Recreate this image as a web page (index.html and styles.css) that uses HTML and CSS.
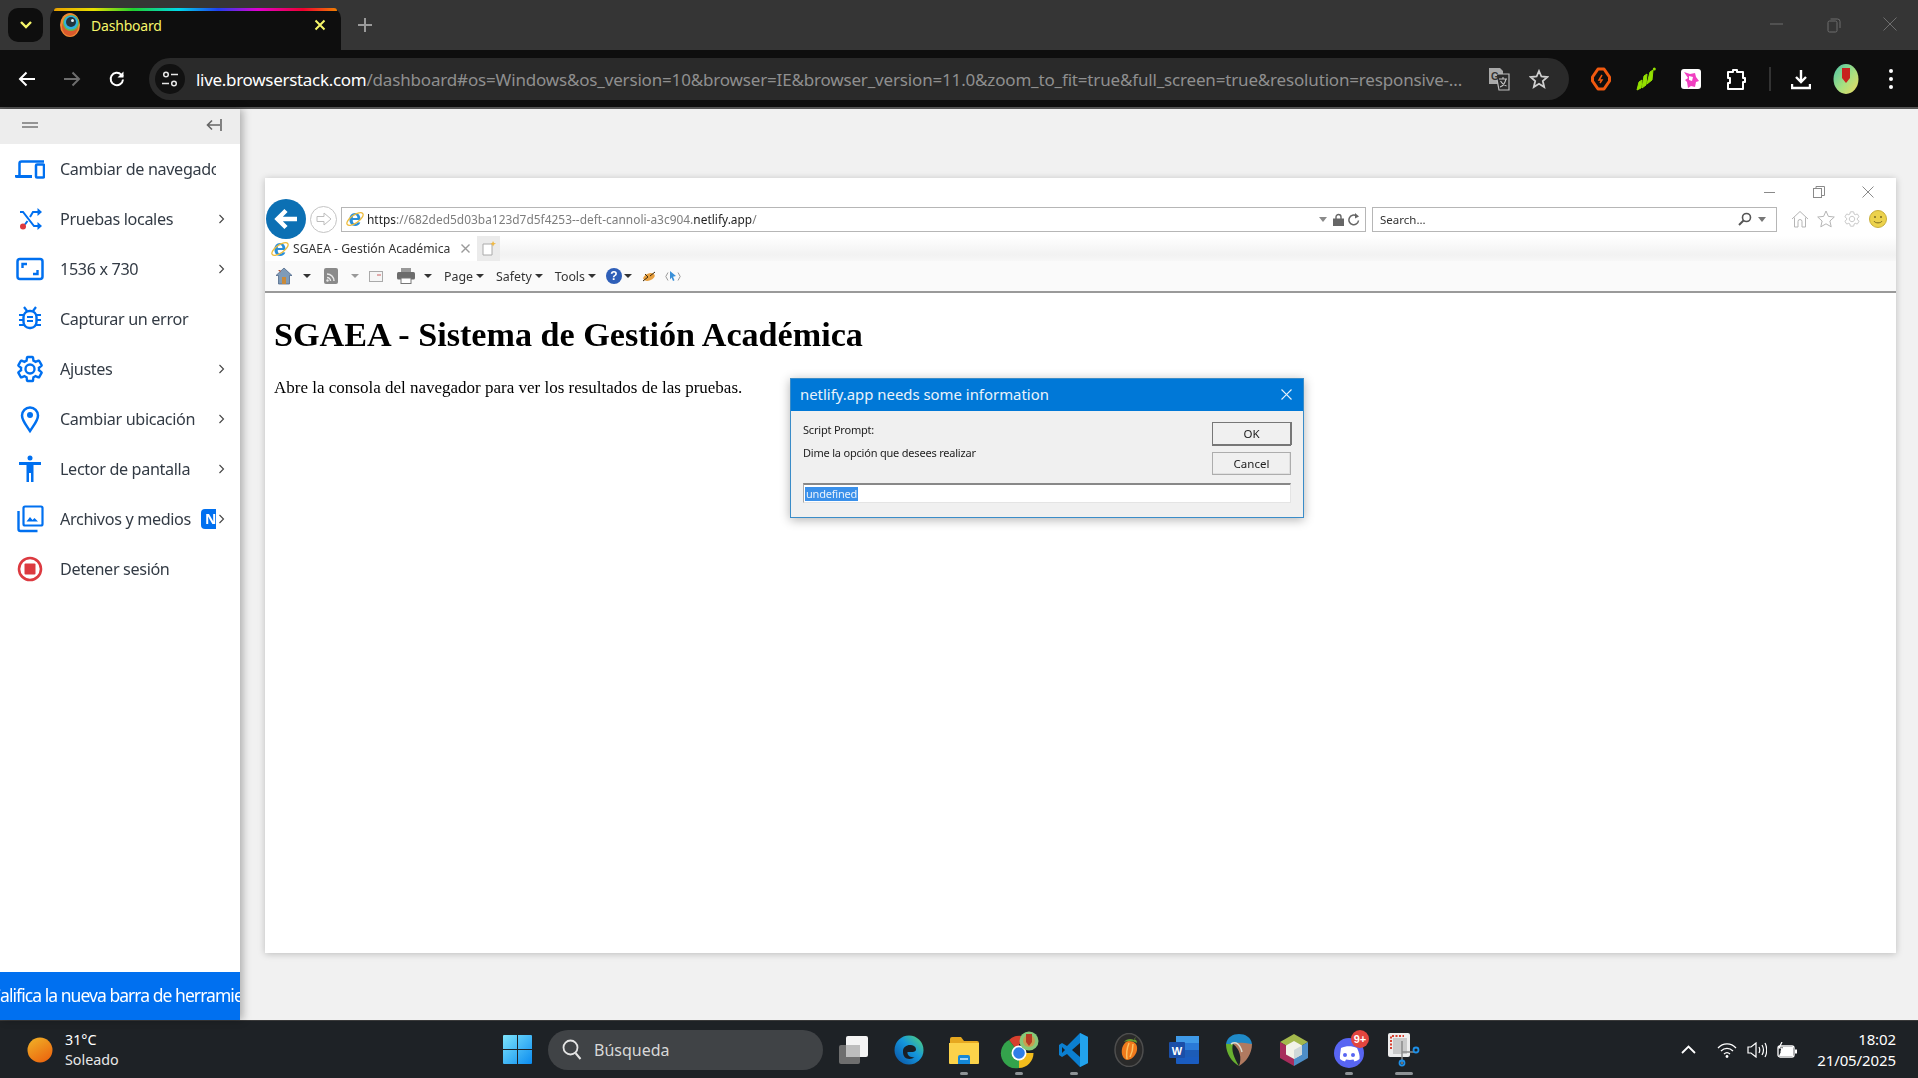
FILE: index.html
```html
<!DOCTYPE html>
<html lang="es">
<head>
<meta charset="utf-8">
<title>Dashboard</title>
<link rel="stylesheet" href="styles.css">
</head>
<body>
<div class="app">

  <div class="tabstrip">
    <div class="tab-search"><svg width="14" height="10" viewBox="0 0 14 10"><path d="M2 2l5 5 5-5" fill="none" stroke="#f6f66a" stroke-width="2.4"/></svg></div>
    <div class="tab">
      <div class="rainbow"></div>
      <svg class="favicon" width="22" height="24" viewBox="0 0 22 24"><ellipse cx="11" cy="12" rx="10" ry="12" fill="#ee8a35"/><ellipse cx="11" cy="14" rx="8" ry="9" fill="#d9592c"/><circle cx="12" cy="10" r="8" fill="#68b84a"/><circle cx="12" cy="9.5" r="7" fill="#2fb0e0"/><circle cx="12" cy="9" r="5" fill="#23343e"/><circle cx="13.5" cy="7.5" r="1.5" fill="#e6f2f5"/></svg>
      <span class="tab-title">Dashboard</span>
      <svg class="tab-x" width="12" height="12" viewBox="0 0 12 12"><path d="M1.5 1.5l9 9M10.5 1.5l-9 9" stroke="#f6f66a" stroke-width="2"/></svg>
    </div>
    <svg class="newtab" width="14" height="14" viewBox="0 0 14 14"><path d="M7 0v14M0 7h14" stroke="#9a9a9a" stroke-width="2"/></svg>
    <div class="winctl">
      <svg width="14" height="14" viewBox="0 0 14 14"><path d="M0 7h13" stroke="#6e6e6e" stroke-width="1"/></svg>
      <svg width="14" height="16" viewBox="0 0 14 16"><rect x="1" y="4" width="9" height="11" rx="1.5" fill="none" stroke="#6e6e6e"/><path d="M3.5 2h7a2.5 2.5 0 0 1 2.500 2.500V11" fill="none" stroke="#6e6e6e"/></svg>
      <svg width="14" height="14" viewBox="0 0 14 14"><path d="M0.500 0.500l13 13M13.500 0.500l-13 13" stroke="#6e6e6e"/></svg>
    </div>
  </div>

  <div class="toolbar">
    <svg class="nav-i" width="18" height="16" viewBox="0 0 18 16"><path d="M17 8H2M8.500 1.500L2 8l6.500 6.500" fill="none" stroke="#fff" stroke-width="2"/></svg>
    <svg class="nav-i" width="18" height="16" viewBox="0 0 18 16"><path d="M1 8h15M9.500 1.500L16 8l-6.500 6.500" fill="none" stroke="#6d6d6d" stroke-width="2"/></svg>
    <svg class="nav-i" width="18" height="18" viewBox="0 0 18 18"><path d="M15 9.500A6.200 6.200 0 1 1 13.200 4.600L15 6.500" fill="none" stroke="#fff" stroke-width="2"/><path d="M15.500 1.500v6h-6z" fill="#fff"/></svg>
    <div class="omnibox">
      <div class="siteinfo"><svg width="18" height="18" viewBox="0 0 18 18"><circle cx="5" cy="4.500" r="2.300" fill="none" stroke="#e6e6e6" stroke-width="1.500"/><path d="M10 4.500h7M1 13.500h7" stroke="#e6e6e6" stroke-width="1.700"/><circle cx="13" cy="13.500" r="2.300" fill="none" stroke="#e6e6e6" stroke-width="1.500"/></svg></div>
      <div class="url"><span class="url-host">live.browserstack.com</span>/dashboard#os=Windows&amp;os_version=10&amp;browser=IE&amp;browser_version=11.0&amp;zoom_to_fit=true&amp;full_screen=true&amp;resolution=responsive-...</div>
      <svg class="omni-i" width="22" height="24" viewBox="0 0 22 24"><path d="M1 1h11l3 3v13H1z" fill="#a9a9a9"/><path d="M8 7h13v16H11z" fill="#2b2b2b" stroke="#bdbdbd" stroke-width="1.200"/><text x="3" y="13" class="svgt-g">G</text><path d="M11 12h8M15 10v2M12 20c3-1 5-4 6-8M12.500 14c1 2 3 4 6 5" fill="none" stroke="#c6c6c6" stroke-width="1.100"/></svg>
      <svg class="omni-i star" width="20" height="20" viewBox="0 0 20 20"><path d="M10 2l2.400 5.500 6 .5-4.600 4 1.400 6L10 14.800 4.800 18l1.400-6-4.600-4 6-.5z" fill="none" stroke="#cfcfcf" stroke-width="1.800"/></svg>
    </div>
    <div class="exts">
      <svg width="20" height="24" viewBox="0 0 20 24"><path d="M7 2h6l5.500 8v4L13 22H7l-5.500-8v-4z" fill="none" stroke="#f0590f" stroke-width="3" stroke-linejoin="round"/><path d="M11 8l-3 5h3l-2 3" fill="none" stroke="#f0590f" stroke-width="1.500"/></svg>
      <svg width="20" height="24" viewBox="0 0 20 24"><path d="M1 23l2-8 3-2-1 8zM6 21l2-12 3-2-1 11zM11 17l3-12 3-2-1 10z" fill="#93e000" stroke="#93e000"/><circle cx="18.300" cy="2" r="1.500" fill="#93e000"/></svg>
      <svg width="20" height="24" viewBox="0 0 20 24"><rect y="2" width="20" height="20" rx="3" fill="#fff"/><path d="M3 5l6 2 5-1 1 4 3 4-3 1-1 5-4-1-3 2-1-6-2-2 3-2z" fill="#f040c0"/><path d="M8 9l4 1-1 4-3-1z" fill="#fff"/></svg>
      <svg width="20" height="24" viewBox="0 0 20 24"><path d="M2 5h5V3h4v2h6v6h2v4h-2v7H2v-6h2v-5H2z" fill="none" stroke="#fff" stroke-width="2" stroke-linejoin="round"/></svg>
      <div class="ext-sep"></div>
      <svg class="ext-dl" width="20" height="24" viewBox="0 0 20 24"><path d="M10 3v12M5 10l5 5 5-5" fill="none" stroke="#fff" stroke-width="2.400"/><path d="M1 17v4h18v-4" fill="none" stroke="#fff" stroke-width="2.400"/></svg>
      <svg class="ext-prof" width="26" height="30" viewBox="0 0 26 30"><defs><linearGradient id="prof" x1="0" y1="0" x2="1" y2="1"><stop offset="0" stop-color="#4ac4a8"/><stop offset=".55" stop-color="#a8e080"/><stop offset="1" stop-color="#f0d860"/></linearGradient></defs><ellipse cx="13" cy="15" rx="12.500" ry="15" fill="url(#prof)"/><path d="M9 4h8v10l-4 5-4-5z" fill="#c8221e"/></svg>
      <svg class="ext-menu" width="8" height="22" viewBox="0 0 8 22"><circle cx="4" cy="3" r="2" fill="#fff"/><circle cx="4" cy="11" r="2" fill="#fff"/><circle cx="4" cy="19" r="2" fill="#fff"/></svg>
    </div>
  </div>
  <div class="chrome-edge"></div>

  <div class="content">
    <aside class="sidebar">
      <div class="side-head">
        <svg width="16" height="6" viewBox="0 0 16 6"><path d="M0 1h16M0 5h16" stroke="#777" stroke-width="1.500"/></svg>
        <svg width="16" height="12" viewBox="0 0 16 12"><path d="M15 0v12" stroke="#666" stroke-width="1.600"/><path d="M14 6H2M6 1.500L1.500 6 6 10.500" fill="none" stroke="#666" stroke-width="1.600"/></svg>
      </div>
      <ul class="side-list">
        <li class="side-row">
          <svg class="side-i" width="30" height="30" viewBox="0 0 30 30"><path d="M4.500 22V9.500a2 2 0 0 1 2-2H29" fill="none" stroke="#0070f0" stroke-width="2.500"/><path d="M0 21h17v3H1.500A1.500 1.500 0 0 1 0 22.500z" fill="#0070f0"/><rect x="21" y="10.500" width="8" height="13" rx="1" fill="none" stroke="#0070f0" stroke-width="2.500"/></svg>
          <span class="side-label">Cambiar de navegador</span><span class="chev-slot"></span>
        </li>
        <li class="side-row">
          <svg class="side-i" width="30" height="30" viewBox="0 0 30 30"><path d="M5 8h3l11 14h5M5 22" fill="none" stroke="#0070f0" stroke-width="2"/><path d="M12.500 17l-2.500 3.500M15 13l3-5h6" fill="none" stroke="#0070f0" stroke-width="2"/><path d="M22.500 4l4.500 4-4.500 4zM22.500 18l4.500 4-4.500 4z" fill="#0070f0"/><circle cx="8" cy="22.500" r="3" fill="#dc3a40"/></svg>
          <span class="side-label">Pruebas locales</span><svg class="chev" width="7" height="10" viewBox="0 0 7 10"><path d="M1.500 1l4 4-4 4" fill="none" stroke="#444" stroke-width="1.100"/></svg>
        </li>
        <li class="side-row">
          <svg class="side-i" width="30" height="30" viewBox="0 0 30 30"><rect x="2.500" y="5" width="25" height="20" rx="2.500" fill="none" stroke="#0070f0" stroke-width="2.500"/><path d="M7.500 14v-4h4.500M22.500 16v4H18" fill="none" stroke="#0070f0" stroke-width="2.400"/></svg>
          <span class="side-label">1536 x 730</span><svg class="chev" width="7" height="10" viewBox="0 0 7 10"><path d="M1.500 1l4 4-4 4" fill="none" stroke="#444" stroke-width="1.100"/></svg>
        </li>
        <li class="side-row">
          <svg class="side-i" width="30" height="30" viewBox="0 0 30 30"><rect x="8.500" y="7" width="13" height="17" rx="6" fill="none" stroke="#0070f0" stroke-width="2.400"/><path d="M12 13h6M12 17h6" stroke="#0070f0" stroke-width="2"/><path d="M9 3l3 4M21 3l-3 4M4 11h5M26 11h-5M4 16h5M26 16h-5M4 21h5M26 21h-5" stroke="#0070f0" stroke-width="2.200"/></svg>
          <span class="side-label">Capturar un error</span><span class="chev-slot"></span>
        </li>
        <li class="side-row">
          <svg class="side-i" width="30" height="30" viewBox="0 0 24 24"><path d="M19.140 12.940c.04-.3.06-.61.06-.94 0-.32-.02-.64-.07-.94l2.030-1.580c.18-.14.23-.41.12-.61l-1.920-3.320c-.12-.22-.37-.29-.59-.22l-2.390.96c-.5-.38-1.030-.7-1.620-.94l-.36-2.540c-.04-.24-.24-.41-.48-.41h-3.840c-.24 0-.43.17-.47.41l-.36 2.540c-.59.24-1.130.57-1.620.94l-2.390-.96c-.22-.08-.47 0-.59.22L2.740 8.870c-.12.21-.08.47.12.61l2.030 1.580c-.05.3-.09.63-.09.94s.02.64.07.94l-2.030 1.580c-.18.14-.23.41-.12.61l1.920 3.320c.12.22.37.29.59.22l2.390-.96c.5.38 1.030.7 1.620.94l.36 2.540c.05.24.24.41.48.41h3.840c.24 0 .44-.17.47-.41l.36-2.540c.59-.24 1.130-.56 1.620-.94l2.390.96c.22.08.47 0 .59-.22l1.920-3.320c.12-.22.07-.47-.12-.61l-2.010-1.580zM12 15.600c-1.980 0-3.600-1.620-3.600-3.600s1.620-3.600 3.600-3.600 3.600 1.620 3.600 3.600-1.620 3.600-3.600 3.600z" fill="none" stroke="#0070f0" stroke-width="1.900"/></svg>
          <span class="side-label">Ajustes</span><svg class="chev" width="7" height="10" viewBox="0 0 7 10"><path d="M1.500 1l4 4-4 4" fill="none" stroke="#444" stroke-width="1.100"/></svg>
        </li>
        <li class="side-row">
          <svg class="side-i" width="30" height="30" viewBox="0 0 30 30"><path d="M15 27C11 21 7 16.500 7 11.500a8 8 0 0 1 16 0C23 16.500 19 21 15 27z" fill="none" stroke="#0070f0" stroke-width="2.500"/><circle cx="15" cy="11" r="3" fill="#0070f0"/></svg>
          <span class="side-label">Cambiar ubicación</span><svg class="chev" width="7" height="10" viewBox="0 0 7 10"><path d="M1.500 1l4 4-4 4" fill="none" stroke="#444" stroke-width="1.100"/></svg>
        </li>
        <li class="side-row">
          <svg class="side-i" width="30" height="30" viewBox="0 0 30 30"><circle cx="15" cy="4" r="2.500" fill="#0070f0"/><path d="M4 8h22v3h-7.500v17h-2.500v-9h-2v9h-2.500V11H4z" fill="#0070f0"/></svg>
          <span class="side-label">Lector de pantalla</span><svg class="chev" width="7" height="10" viewBox="0 0 7 10"><path d="M1.500 1l4 4-4 4" fill="none" stroke="#444" stroke-width="1.100"/></svg>
        </li>
        <li class="side-row">
          <svg class="side-i" width="30" height="30" viewBox="0 0 30 30"><rect x="8.500" y="2.500" width="19" height="19" rx="1.500" fill="none" stroke="#0070f0" stroke-width="2.200"/><path d="M3.500 7v18a2 2 0 0 0 2 2h17" fill="none" stroke="#0070f0" stroke-width="2.400"/><path d="M11.500 17.500l3.500-4.500 2.500 3 2-2 3.500 3.500z" fill="#0070f0"/></svg>
          <span class="side-label">Archivos y medios<span class="new-badge">NEW</span></span><svg class="chev" width="7" height="10" viewBox="0 0 7 10"><path d="M1.500 1l4 4-4 4" fill="none" stroke="#444" stroke-width="1.100"/></svg>
        </li>
        <li class="side-row">
          <svg class="side-i" width="30" height="30" viewBox="0 0 30 30"><circle cx="15" cy="15" r="11" fill="none" stroke="#dc3a40" stroke-width="2.600"/><rect x="9.500" y="9.500" width="11" height="11" rx="1" fill="#dc3a40"/></svg>
          <span class="side-label">Detener sesión</span><span class="chev-slot"></span>
        </li>
      </ul>
      <div class="side-foot"><span class="foot-text">Califica la nueva barra de herramientas</span></div>
    </aside>

    <main class="stage">
      <div class="ie">
        <div class="ie-ctl">
          <svg width="12" height="12" viewBox="0 0 12 12"><path d="M0 6.500h11" stroke="#8a8a8a"/></svg>
          <svg width="12" height="12" viewBox="0 0 12 12"><rect x=".5" y="2.500" width="8" height="9" fill="#fff" stroke="#8a8a8a"/><path d="M3 2.500V.5h8.500v9H9" fill="none" stroke="#8a8a8a"/></svg>
          <svg width="12" height="12" viewBox="0 0 12 12"><path d="M.5.500l11 11M11.500.500l-11 11" stroke="#8a8a8a"/></svg>
        </div>
        <div class="ie-nav">
          <div class="ie-back"><svg width="24" height="22" viewBox="0 0 24 22"><path d="M23 11H5M12 2.500L3.500 11l8.500 8.500" fill="none" stroke="#fff" stroke-width="4.500"/></svg></div>
          <div class="ie-fwd"><svg width="16" height="14" viewBox="0 0 16 14"><path d="M1 4.500h7V1l7 6-7 6V9.500H1z" fill="none" stroke="#bdbdbd"/></svg></div>
          <div class="ie-addr">
            <svg class="ie-logo" width="18" height="18" viewBox="0 0 18 18"><text x="9" y="15.500" class="svgt-e">e</text><ellipse cx="9" cy="9" rx="9.500" ry="4" transform="rotate(-35 9 9)" fill="none" stroke="#eebc3c" stroke-width="1.300"/></svg>
            <span class="ie-url"><span class="ie-dark">https</span>://682ded5d03ba123d7d5f4253--deft-cannoli-a3c904.<span class="ie-dark">netlify.app</span>/</span>
            <svg class="ie-caret" width="8" height="5" viewBox="0 0 8 5"><path d="M0 0h8L4 5z" fill="#8a8a8a"/></svg>
            <svg class="ie-lock" width="11" height="13" viewBox="0 0 11 13"><path d="M3 6V4a2.500 2.500 0 0 1 5 0v2" fill="none" stroke="#666" stroke-width="1.400"/><rect y="5.500" width="11" height="7.500" fill="#666"/></svg>
            <svg width="12" height="13" viewBox="0 0 12 13"><path d="M10.500 7.500A4.800 4.800 0 1 1 8.500 3" fill="none" stroke="#666" stroke-width="1.500"/><path d="M7 0l4 3.500-4 2z" fill="#666"/></svg>
          </div>
          <div class="ie-search">
            <span class="ie-search-t">Search...</span>
            <svg width="14" height="14" viewBox="0 0 14 14"><circle cx="8.500" cy="5.500" r="4" fill="none" stroke="#555" stroke-width="1.600"/><path d="M5.500 8.500L1 13" stroke="#555" stroke-width="2"/></svg>
            <svg class="ie-caret2" width="8" height="5" viewBox="0 0 8 5"><path d="M0 0h8L4 5z" fill="#777"/></svg>
          </div>
          <div class="ie-tools">
            <svg width="18" height="18" viewBox="0 0 18 18"><path d="M1 9l8-7.500L17 9M3.500 7.500V17h3.500v-5.500a2 2 0 0 1 4 0V17h3.500V7.500" fill="none" stroke="#b5b5b5"/></svg>
            <svg width="18" height="18" viewBox="0 0 18 18"><path d="M9 1l2.400 5.400 5.900.6-4.400 4 1.300 5.800L9 13.800l-5.200 3 1.300-5.800-4.400-4 5.900-.6z" fill="none" stroke="#b5b5b5"/></svg>
            <svg width="18" height="18" viewBox="0 0 24 24"><path d="M19.140 12.940c.04-.3.06-.61.06-.94 0-.32-.02-.64-.07-.94l2.030-1.580c.18-.14.23-.41.12-.61l-1.920-3.320c-.12-.22-.37-.29-.59-.22l-2.390.96c-.5-.38-1.030-.7-1.620-.94l-.36-2.540c-.04-.24-.24-.41-.48-.41h-3.840c-.24 0-.43.17-.47.41l-.36 2.540c-.59.24-1.130.57-1.620.94l-2.390-.96c-.22-.08-.47 0-.59.22L2.740 8.870c-.12.21-.08.47.12.61l2.030 1.580c-.05.3-.09.63-.09.94s.02.64.07.94l-2.030 1.580c-.18.14-.23.41-.12.61l1.920 3.320c.12.22.37.29.59.22l2.390-.96c.5.38 1.030.7 1.620.94l.36 2.540c.05.24.24.41.48.41h3.840c.24 0 .44-.17.47-.41l.36-2.540c.59-.24 1.130-.56 1.620-.94l2.390.96c.22.08.47 0 .59-.22l1.920-3.320c.12-.22.07-.47-.12-.61l-2.010-1.580zM12 15.600c-1.980 0-3.600-1.620-3.600-3.600s1.620-3.600 3.600-3.600 3.600 1.620 3.600 3.600-1.620 3.600-3.600 3.600z" fill="none" stroke="#b5b5b5"/></svg>
            <svg width="18" height="18" viewBox="0 0 18 18"><circle cx="9" cy="9" r="8.500" fill="#ecd24c" stroke="#c8ae3a"/><circle cx="6" cy="7" r="1" fill="#7a6a20"/><circle cx="12" cy="7" r="1" fill="#7a6a20"/><path d="M5 11c1 2.500 7 2.500 8 0" fill="none" stroke="#7a6a20"/></svg>
          </div>
        </div>
        <div class="ie-tabs">
          <div class="ie-tab">
            <svg width="18" height="18" viewBox="0 0 18 18"><text x="9" y="15.500" class="svgt-e">e</text><ellipse cx="9" cy="9" rx="9.500" ry="4" transform="rotate(-35 9 9)" fill="none" stroke="#eebc3c" stroke-width="1.300"/></svg>
            <span class="ie-tab-t">SGAEA - Gestión Académica</span>
            <svg class="ie-tab-x" width="9" height="9" viewBox="0 0 9 9"><path d="M.5.500l8 8M8.500.500l-8 8" stroke="#9a9a9a" stroke-width="1.400"/></svg>
          </div>
          <div class="ie-newtab"><svg width="14" height="15" viewBox="0 0 14 15"><path d="M1 3h9v11H1z" fill="#fff" stroke="#aaa"/><path d="M11 0l1 2 2 .5-2 1-1 2-.8-2-2-.8 2-.7z" fill="#f0b840"/></svg></div>
        </div>
        <div class="ie-cmd">
          <svg class="c-home" width="18" height="18" viewBox="0 0 18 18"><path d="M9 1L1 8.500h2.500V17h11V8.500H17z" fill="#7f9bb8" stroke="#50688a" stroke-width=".8"/><rect x="7" y="10" width="4" height="7" fill="#c98a3a"/><path d="M3 3h2.500v2.500z" fill="#bb5a3a"/></svg>
          <i class="drop d1"></i>
          <svg class="c-rss" width="14" height="16" viewBox="0 0 14 16"><rect width="14" height="16" rx="2" fill="#8a8a8a"/><path d="M3 6a7 7 0 0 1 7 7M3 9.500a3.500 3.500 0 0 1 3.500 3.500" fill="none" stroke="#e8e8e8" stroke-width="1.500"/><circle cx="3.500" cy="12.500" r="1.200" fill="#e8e8e8"/></svg>
          <i class="drop d2 faded"></i>
          <svg class="c-mail" width="14" height="11" viewBox="0 0 14 11"><rect x=".5" y=".5" width="13" height="10" fill="#f6f6f6" stroke="#aaa"/><path d="M8 4h4" stroke="#cc6060"/></svg>
          <svg class="c-print" width="18" height="16" viewBox="0 0 18 16"><rect x="4" y="0" width="10" height="5" fill="#999"/><rect y="4" width="18" height="7.500" rx="1.500" fill="#6c6c6c"/><rect x="4" y="10" width="10" height="5.500" fill="#fff" stroke="#777"/></svg>
          <i class="drop d3"></i>
          <span class="c-label">Page</span><i class="drop d4"></i>
          <span class="c-label c-s">Safety</span><i class="drop d4"></i>
          <span class="c-label c-s">Tools</span><i class="drop d4"></i>
          <span class="c-help">?</span><i class="drop d5"></i>
          <svg class="c-bug" width="16" height="12" viewBox="0 0 16 12"><ellipse cx="8" cy="7" rx="6" ry="3.500" transform="rotate(-20 8 7)" fill="#e8a040"/><path d="M2 11l5-4M14 2L9 6M4 4l3 3" stroke="#3a2a10"/></svg>
          <svg class="c-dev" width="16" height="11" viewBox="0 0 16 11"><path d="M3 1.500L.8 5.500 3 9.500M13 1.500l2.200 4-2.200 4" fill="none" stroke="#9a9a9a"/><path d="M5 0l6 5-3 .7 1.500 3.500-1.500.8L6.500 6.500 5 8.500z" fill="#3a90d8"/></svg>
        </div>
        <div class="ie-page">
          <h1 class="ie-h1">SGAEA - Sistema de Gestión Académica</h1>
          <p class="ie-p">Abre la consola del navegador para ver los resultados de las pruebas.</p>
        </div>
        <div class="dialog">
          <div class="dlg-title"><span>netlify.app needs some information</span><svg width="11" height="11" viewBox="0 0 11 11"><path d="M.5.500l10 10M10.500.500l-10 10" stroke="#e8f2fb" stroke-width="1.200"/></svg></div>
          <div class="dlg-body">
            <div class="dlg-top">
              <div class="dlg-msg"><div>Script Prompt:</div><div>Dime la opción que desees realizar</div></div>
              <div class="dlg-btns"><div class="btn btn-ok">OK</div><div class="btn">Cancel</div></div>
            </div>
            <div class="dlg-input"><span class="sel">undefined</span></div>
          </div>
        </div>
      </div>
    </main>
  </div>

  <footer class="taskbar">
    <div class="weather">
      <svg width="26" height="26" viewBox="0 0 26 26"><defs><linearGradient id="sun" x1="0" y1="0" x2=".6" y2="1"><stop offset="0" stop-color="#f0b428"/><stop offset="1" stop-color="#ec6a10"/></linearGradient></defs><circle cx="13" cy="13" r="12.500" fill="url(#sun)"/></svg>
      <div class="w-text"><div class="w-temp">31°C</div><div>Soleado</div></div>
    </div>
    <svg class="winlogo" width="29" height="29" viewBox="0 0 29 29"><defs><linearGradient id="win" x1="0" y1="0" x2="1" y2="1"><stop offset="0" stop-color="#7de4fb"/><stop offset="1" stop-color="#0b8cf0"/></linearGradient></defs><path d="M0 1a1 1 0 0 1 1-1h13v14H0zM15 0h13a1 1 0 0 1 1 1v13H15zM0 15h14v14H1a1 1 0 0 1-1-1zM15 15h14v13a1 1 0 0 1-1 1H15z" fill="url(#win)"/></svg>
    <div class="t-search">
      <svg width="20" height="22" viewBox="0 0 20 22"><circle cx="8.500" cy="8.500" r="7" fill="none" stroke="#e4e4e4" stroke-width="1.800"/><path d="M13.500 14l5 6" stroke="#e4e4e4" stroke-width="2"/></svg>
      <span>Búsqueda</span>
    </div>
    <div class="t-apps">
      <div class="t-app"><svg width="30" height="28" viewBox="0 0 30 28"><rect x="0" y="9" width="21" height="19" rx="2" fill="#6e6e6e"/><rect x="7" y="0" width="22" height="21" rx="2" fill="#f4f4f4"/><rect x="7" y="9" width="14" height="12" fill="#bdbdbd"/></svg></div>
      <div class="t-app"><svg width="30" height="30" viewBox="0 0 30 30"><defs><linearGradient id="edge" x1="0" y1="1" x2="1" y2="0"><stop offset="0" stop-color="#0a4ea0"/><stop offset=".55" stop-color="#1496dc"/><stop offset="1" stop-color="#58d870"/></linearGradient></defs><circle cx="15" cy="15" r="14.500" fill="url(#edge)"/><path d="M9 16c0-4 4-6.500 8-6 3 .4 5 2 5 4.500 0 1.500-1.500 2.500-3.500 2.500h-5c-.5 3 2.500 6 7 5-3 3-12 3.500-11.500-6z" fill="#1a1f24"/></svg></div>
      <div class="t-app on"><svg width="30" height="30" viewBox="0 0 30 30"><path d="M1 4a2 2 0 0 1 2-2h9l3 4h13a2 2 0 0 1 2 2v4H1z" fill="#e6a820"/><path d="M0 8h30v20a1 1 0 0 1-1 1H1a1 1 0 0 1-1-1z" fill="#fbd24a"/><path d="M9 22a2 2 0 0 1 2-2h8a2 2 0 0 1 2 2v7H9z" fill="#1488d8"/><rect x="11" y="23" width="8" height="2" fill="#9ed4f8"/></svg></div>
      <div class="t-app on"><svg width="40" height="40" viewBox="0 0 40 40"><g transform="translate(5 8)"><path d="M15 15L5 2A15 15 0 0 1 29 6H15z" fill="#d8402e"/><path d="M15 15H29.500A15 15 0 0 1 15 30z" fill="#f2bc1c"/><path d="M15 15v15A15 15 0 0 1 5 2z" fill="#34a34c"/><circle cx="15" cy="15" r="7.500" fill="#fff"/><circle cx="15" cy="15" r="5.800" fill="#2f7ee8"/></g><circle cx="30" cy="11" r="9.500" fill="#86c878"/><circle cx="30" cy="11" r="6" fill="#c8a050"/><path d="M27 4h6v8l-3 4-3-4z" fill="#b83a24"/></svg></div>
      <div class="t-app on"><svg width="30" height="34" viewBox="0 0 30 34"><path d="M21 0l8 4v26l-8 4L8 21l-5 3-3-2V12l3-2 5 3z" fill="#0b7fd0"/><path d="M21 0l8 4v26l-8 4z" fill="#22a2ec"/><path d="M21 10v14l-8-7z" fill="#1a1f24"/><path d="M3 14v6l3-3z" fill="#1a1f24"/></svg></div>
      <div class="t-app"><svg width="30" height="34" viewBox="0 0 30 34"><ellipse cx="15" cy="17" rx="14" ry="16.500" fill="#2a2a2a" stroke="#4e4e4e" stroke-width="1.500"/><path d="M15 8c5 0 9 3 8 9-1 6-6 10-10 10-4-1-6-6-5-11 .6-3 3-8 7-8z" fill="#ef7a1c"/><path d="M15 10c-2 5-3 10-2 16M19 11c0 5-1 9-3 13" stroke="#fbc060" stroke-width="1.500" fill="none"/><path d="M10 9c2-3 7-4 10-2l3-4-3 3c3 1 3 3 3 4-3-2-9-3-13-1z" fill="#6a9a30"/></svg></div>
      <div class="t-app"><svg width="30" height="30" viewBox="0 0 30 30"><rect x="7" y="1" width="23" height="28" rx="1" fill="#1a5cc0"/><rect x="7" y="1" width="23" height="7" fill="#3f9ae8"/><rect x="7" y="8" width="23" height="7" fill="#2a7ad8"/><rect x="7" y="15" width="23" height="7" fill="#1c5cb8"/><rect x="0" y="7" width="16" height="16" rx="1" fill="#1b4fa8"/><text x="8" y="20" class="svgt-w">W</text></svg></div>
      <div class="t-app"><svg width="28" height="32" viewBox="0 0 28 32"><path d="M1 10C2 3 8 0 14 0s12 3 13 10z" fill="#1f8ac8"/><path d="M1 10c0 10 6 18 13 22C9 24 6 16 8 10z" fill="#68b030"/><path d="M8 10c4-2 10-1 19 0 0 10-6 18-13 22 3-8 1-17-6-22z" fill="#b07a60"/><path d="M6 10c5-3 9 0 11 8" fill="none" stroke="#dcdcd0" stroke-width="1.500"/></svg></div>
      <div class="t-app"><svg width="28" height="32" viewBox="0 0 28 32"><path d="M14 0l14 8-14 8L0 8z" fill="#a4b84c"/><path d="M0 8l14 8v16L0 24z" fill="#a82c5c"/><path d="M28 8L14 16v16l14-8z" fill="#4d8ec8"/><path d="M14 7l8 4.500v9L14 25l-8-4.500v-9z" fill="#f2f2e8"/><path d="M14 16l8-4.500v9L14 25z" fill="#cfd8d8"/></svg></div>
      <div class="t-app on"><svg width="40" height="40" viewBox="0 0 40 40"><g transform="translate(2 0)"><circle cx="18" cy="23" r="15" fill="#5865f2"/><path d="M10 18c5-2.500 11-2.500 16 0 2 4 3 8 2.500 11-2 1.500-3.500 2-5 2.500l-1-2c-2.500.5-5 .5-7.500 0l-1 2c-1.500-.5-3-1-5-2.500-.5-3 .5-7 1-11z" fill="#fff"/><circle cx="14" cy="25" r="2" fill="#5865f2"/><circle cx="22" cy="25" r="2" fill="#5865f2"/><circle cx="29" cy="9" r="9" fill="#e2453f"/><text x="29" y="13" class="svgt-n">9+</text></g></svg></div>
      <div class="t-app on wide"><svg width="32" height="36" viewBox="0 0 32 36"><rect x="0" y="1" width="22" height="24" rx="2" fill="#ededed"/><path d="M3 17V4h13" fill="none" stroke="#d84030" stroke-width="2" stroke-dasharray="2 1.500"/><rect x="5" y="6" width="14" height="16" fill="#c9c9c9"/><path d="M14 9v23M14 20l12 0" stroke="#8a8a8a" stroke-width="1.500"/><circle cx="28" cy="18" r="2.500" fill="none" stroke="#1e90e8" stroke-width="1.800"/><circle cx="14" cy="31" r="2.500" fill="none" stroke="#1e90e8" stroke-width="1.800"/></svg></div>
    </div>
    <div class="tray">
      <svg class="tray-up" width="15" height="9" viewBox="0 0 15 9"><path d="M1 8l6.500-6.500L14 8" fill="none" stroke="#fff" stroke-width="1.800"/></svg>
      <svg width="20" height="16" viewBox="0 0 20 16"><path d="M1 6c5-5.500 13-5.500 18 0M4 9c3.500-3.500 8.500-3.500 12 0M7 12c1.800-1.700 4.200-1.700 6 0" fill="none" stroke="#fff" stroke-width="1.300"/><circle cx="10" cy="14.500" r="1.400" fill="#fff"/></svg>
      <svg width="20" height="16" viewBox="0 0 20 16"><path d="M1 5h3l5-4v14l-5-4H1z" fill="none" stroke="#fff" stroke-width="1.200"/><path d="M12 5c1 2 1 4 0 6M15 3c1.800 3 1.800 7 0 10M18 1c2.300 4 2.300 10 0 14" fill="none" stroke="#fff" stroke-width="1.200"/></svg>
      <svg width="20" height="16" viewBox="0 0 20 16"><rect x="1" y="4" width="16" height="11" rx="2" fill="none" stroke="#fff" stroke-width="1.300"/><path d="M2 14l4-9h10v9z" fill="#fff"/><rect x="18" y="7.500" width="2" height="4" fill="#fff"/><path d="M5 0L2 6h3l-1 4" fill="none" stroke="#fff" stroke-width="1.200"/></svg>
      <div class="clock"><div>18:02</div><div>21/05/2025</div></div>
    </div>
  </footer>
</div>
</body>
</html>
```
FILE: styles.css
```css
* { box-sizing: border-box; }
html, body { margin: 0; padding: 0; }
body { font-family: "Noto Sans", "Open Sans", sans-serif; background: #f1f1f1; overflow: hidden; }
.app { width: 1918px; height: 1078px; display: flex; flex-direction: column; overflow: hidden; }

/* svg text */
.svgt-g { font: bold 10px "Liberation Sans", sans-serif; fill: #333; }
.svgt-e { font: bold 23px "Liberation Sans", sans-serif; fill: #2a8fd8; text-anchor: middle; }
.svgt-w { font: bold 11px "Liberation Sans", sans-serif; fill: #fff; text-anchor: middle; }
.svgt-n { font: bold 11px "Liberation Sans", sans-serif; fill: #fff; text-anchor: middle; }

/* tab strip */
.tabstrip { height: 50px; background: #353535; display: flex; align-items: flex-start; padding-left: 8px; flex: none; }
.tab-search { width: 35px; height: 34px; margin-top: 8px; background: #0e0e0e; border-radius: 10px; display: flex; align-items: center; justify-content: center; }
.tab { position: relative; width: 291px; height: 42px; margin: 8px 0 0 7px; background: #0e0e0e; border-radius: 10px 10px 0 0; display: flex; align-items: center; padding: 0 15px 8px 9px; }
.rainbow { position: absolute; left: 4px; right: 4px; top: 0; height: 3px; border-radius: 3px 3px 0 0; background: linear-gradient(90deg, #e8a000, #e8e000 14%, #20d030 28%, #00d8e8 44%, #2040f0 58%, #e000d0 72%, #f00030 88%, #f08000); }
.tab-title { margin-left: 10px; flex: 1; color: #f6f66a; font-size: 14px; letter-spacing: -0.2px; }
.tab-x { flex: none; }
.newtab { margin: 18px 0 0 17px; }
.winctl { margin-left: auto; margin-top: 17px; width: 148px; padding-right: 21px; display: flex; justify-content: space-between; }

/* toolbar */
.toolbar { height: 57px; background: #0e0e0e; display: flex; align-items: center; padding-left: 18px; flex: none; }
.nav-i { margin-right: 27px; flex: none; }
.omnibox { width: 1420px; height: 42px; margin-left: -4px; background: #2a2a2a; border-radius: 21px; display: flex; align-items: center; padding: 0 14px 0 6px; flex: none; }
.siteinfo { width: 30px; height: 30px; border-radius: 50%; background: #111; display: flex; align-items: center; justify-content: center; flex: none; }
.url { margin-left: 11px; width: 1292px; flex: none; font-size: 17px; color: #8f8f8f; white-space: nowrap; overflow: hidden; letter-spacing: -0.17px; padding-top: 1px; }
.url-host { color: #fff; letter-spacing: -0.3px; }
.omni-i { flex: none; }
.star { margin-left: 19px; }
.exts { display: flex; align-items: center; flex: 1; padding-left: 22px; gap: 25px; }
.ext-sep { width: 2px; height: 24px; margin-left: -2px; background: #333; }
.ext-dl { margin-left: -5px; }
.ext-prof { margin-left: -3px; }
.ext-menu { margin-left: 3px; }
.chrome-edge { height: 2px; background: #555; flex: none; }

/* content */
.content { flex: 1; display: flex; min-height: 0; background: #f1f1f1; }
.sidebar { width: 240px; flex: none; background: #fff; display: flex; flex-direction: column; box-shadow: 3px 0 8px rgba(0,0,0,.28); z-index: 2; }
.side-head { height: 35px; background: #ededed; display: flex; align-items: center; justify-content: space-between; padding: 0 18px 3px 22px; flex: none; }
.side-list { list-style: none; margin: 0; padding: 0; flex: 1; }
.side-row { height: 50px; display: flex; align-items: center; padding-left: 15px; }
.side-i { flex: none; margin-right: 15px; }
.side-label { width: 156px; flex: none; overflow: hidden; white-space: nowrap; font-size: 16.2px; color: #333b45; display: flex; align-items: center; letter-spacing: -0.36px; padding-bottom: 1px; }
.new-badge { flex: none; margin-left: 10px; background: #0070f0; color: #fff; font-size: 14px; font-weight: 700; height: 20px; line-height: 20px; padding: 0 4px; border-radius: 4px; letter-spacing: 0; }
.chev { margin-left: 2px; flex: none; }
.chev-slot { width: 7px; }
.side-foot { height: 48px; background: #0070f0; display: flex; align-items: center; overflow: hidden; flex: none; padding-bottom: 2px; }
.foot-text { color: #fff; font-size: 17.5px; white-space: nowrap; margin-left: -10px; letter-spacing: -0.95px; }

/* stage */
.stage { flex: 1; padding: 69px 22px 67px 25px; min-width: 0; }
.ie { position: relative; width: 1631px; height: 775px; background: #fff; box-shadow: 0 1px 7px rgba(0,0,0,.22); display: flex; flex-direction: column; filter: blur(.35px); }
.ie-ctl { height: 27px; display: flex; justify-content: flex-end; align-items: flex-end; gap: 37px; padding-right: 22px; padding-bottom: 7px; flex: none; }
.ie-nav { height: 31px; display: flex; align-items: center; padding-bottom: 3px; flex: none; }
.ie-back { width: 40px; height: 40px; margin-left: 1px; border-radius: 50%; background: #0c70b4; display: flex; align-items: center; justify-content: center; flex: none; position: relative; z-index: 1; }
.ie-fwd { width: 27px; height: 27px; margin-left: 4px; border-radius: 50%; border: 1px solid #c4c4c4; display: flex; align-items: center; justify-content: center; flex: none; }
.ie-addr { width: 1025px; height: 25px; margin-left: 4px; border: 1px solid #b6b6b6; display: flex; align-items: center; padding: 0 5px 0 4px; flex: none; }
.ie-logo { flex: none; }
.ie-url { margin-left: 3px; flex: 1; font-size: 11.9px; color: #7d7d7d; white-space: nowrap; letter-spacing: 0.02px; }
.ie-dark { color: #222; }
.ie-caret { margin-right: 6px; }
.ie-lock { margin-right: 4px; }
.ie-search { width: 405px; height: 25px; margin-left: 6px; border: 1px solid #b6b6b6; display: flex; align-items: center; padding: 0 10px 0 7px; flex: none; }
.ie-search-t { flex: 1; font-size: 11.5px; color: #333; }
.ie-caret2 { margin-left: 6px; }
.ie-tools { display: flex; align-items: center; gap: 8px; margin-left: 14px; }
.ie-tabs { height: 25px; display: flex; flex: none; background: linear-gradient(180deg, #fff 0%, #f2f2f2 75%, #f7f7f7 100%); }
.ie-tab { width: 212px; background: #fff; display: flex; align-items: center; padding: 0 7px 0 6px; }
.ie-tab-t { flex: 1; margin-left: 4px; font-size: 12.2px; color: #333; white-space: nowrap; }
.ie-newtab { width: 23px; background: #ebebeb; display: flex; align-items: center; justify-content: center; }
.ie-cmd { height: 32px; background: #fafafa; border-bottom: 2px solid #9a9a9a; display: flex; align-items: center; padding-left: 10px; flex: none; }
.drop { display: block; width: 0; height: 0; border-left: 4px solid transparent; border-right: 4px solid transparent; border-top: 4px solid #333; flex: none; }
.drop.faded { border-top-color: #999; }
.c-home { margin-right: 10px; }
.d1 { margin-right: 13px; }
.d2 { margin: 0 10px 0 13px; }
.c-mail { margin-right: 14px; }
.c-print { margin-right: 9px; }
.d3 { margin-right: 12px; }
.c-label { font-size: 12.4px; color: #333; margin-right: 3px; }
.d4 { margin-right: 12px; }
.c-help { width: 16px; height: 16px; border-radius: 50%; background: #2f5fb8; color: #fff; font: bold 12px/16px "Liberation Sans", sans-serif; text-align: center; margin-left: -2px; margin-right: 2px; }
.d5 { margin-right: 9px; }
.c-bug { margin-right: 8px; }
.ie-page { flex: 1; padding: 22px 9px 0; font-family: "Liberation Serif", serif; color: #000; }
.ie-h1 { margin: 0; font-size: 34.15px; line-height: 39px; font-weight: 700; }
.ie-p { margin: 24px 0 0; font-size: 17px; line-height: 19px; }

/* dialog */
.dialog { position: absolute; left: 525px; top: 200px; width: 514px; height: 140px; background: #f0f0f0; border: 1.5px solid #3a8cc8; box-shadow: 0 2px 10px rgba(0,0,0,.3); display: flex; flex-direction: column; z-index: 5; }
.dlg-title { height: 32px; background: #0078d7; color: #eaf3fb; font-size: 14.9px; display: flex; align-items: center; justify-content: space-between; padding: 0 11px 2px 9px; flex: none; }
.dlg-body { flex: 1; padding: 11px 12px 0 12px; display: flex; flex-direction: column; }
.dlg-top { display: flex; justify-content: space-between; height: 59px; }
.dlg-msg { font-size: 11px; color: #222; line-height: 23px; letter-spacing: -0.2px; margin-top: -4px; }
.dlg-btns { display: flex; flex-direction: column; gap: 7px; }
.btn { width: 79px; height: 23px; border: 1px solid #adadad; background: #f0f0f0; font-size: 11.5px; color: #222; text-align: center; line-height: 21px; box-shadow: inset -1px -1px 0 #e0e0e0; }
.btn-ok { border: 1px solid #777; box-shadow: 0 1px 0 #777, 1px 0 0 #777; }
.dlg-input { height: 20px; margin-top: 2px; background: #fff; border-top: 2px solid #888; border-left: 1px solid #aaa; border-right: 1px solid #e4e4e4; border-bottom: 1px solid #e4e4e4; padding-left: 1px; display: flex; align-items: center; }
.sel { background: #3a90ea; color: #e8f1fb; font-size: 11px; line-height: 14px; padding: 0 1px; letter-spacing: -0.2px; }

/* taskbar */
.taskbar { height: 58px; flex: none; background: #1e2226; border-top: 1px solid #3a3a3a; display: flex; align-items: center; padding-left: 27px; position: relative; }
.weather { display: flex; align-items: center; gap: 12px; width: 476px; color: #e8e8e8; font-size: 14.3px; line-height: 20px; flex: none; }
.w-temp { color: #fff; }
.winlogo { flex: none; }
.t-search { width: 275px; height: 40px; margin-left: 16px; border-radius: 20px; background: #404346; display: flex; align-items: center; gap: 12px; padding-left: 14px; color: #d8d8d8; font-size: 16px; flex: none; }
.t-apps { display: flex; margin-left: 3px; flex: none; }
.t-app { position: relative; width: 55px; height: 57px; display: flex; align-items: center; justify-content: center; }
.t-app.on::after { content: ""; position: absolute; left: 50%; bottom: 3px; width: 8px; height: 3px; margin-left: -4px; border-radius: 2px; background: #8e9296; }
.t-app.wide::after { width: 18px; margin-left: -9px; }
.tray { margin-left: auto; display: flex; align-items: center; gap: 10px; padding-right: 22px; color: #fff; }
.tray-up { margin-right: 11px; }
.clock { margin-left: 10px; text-align: right; font-size: 15px; line-height: 20.5px; letter-spacing: -0.1px; }
```
